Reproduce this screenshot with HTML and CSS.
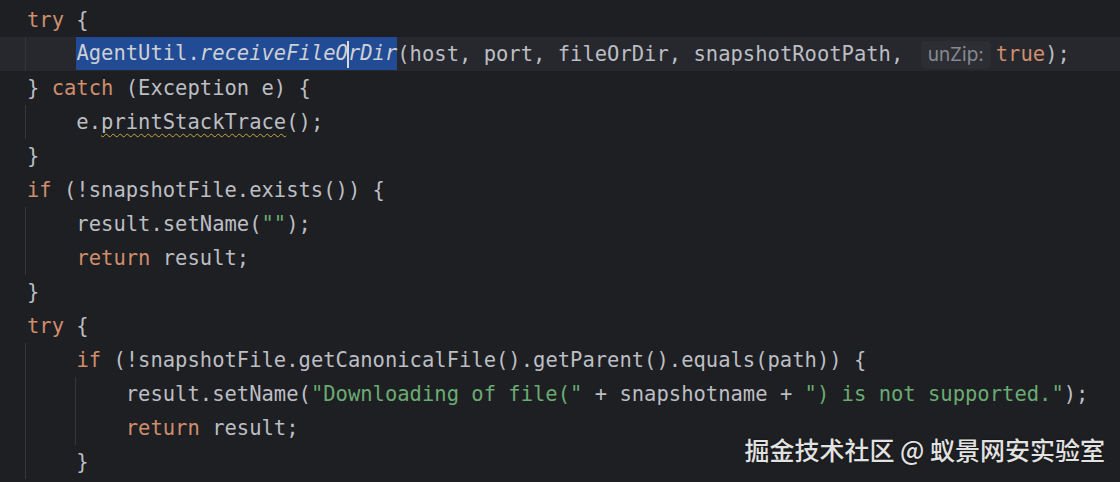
FILE: index.html
```html
<!DOCTYPE html>
<html lang="en">
<head>
<meta charset="utf-8">
<title>Editor</title>
<link rel="stylesheet" href="styles.css">
</head>
<body>
<div class="editor">
  <div class="code">
    <div class="line"><span class="kw">try</span> {</div>
    <div class="line current g1">    <span class="sel">AgentUtil.<span class="it">receiveFileO</span><span class="caret"></span><span class="it">rDir</span></span>(host, port, fileOrDir, snapshotRootPath, <span class="hint">unZip:</span><span class="kw">true</span>);</div>
    <div class="line">} <span class="kw">catch</span> (Exception e) {</div>
    <div class="line g1">    e.<span class="warn">printStackTrace</span>();</div>
    <div class="line">}</div>
    <div class="line"><span class="kw">if</span> (!snapshotFile.exists()) {</div>
    <div class="line g1">    result.setName(<span class="str">""</span>);</div>
    <div class="line g1">    <span class="kw">return</span> result;</div>
    <div class="line">}</div>
    <div class="line"><span class="kw">try</span> {</div>
    <div class="line g1">    <span class="kw">if</span> (!snapshotFile.getCanonicalFile().getParent().equals(path)) {</div>
    <div class="line g2">        result.setName(<span class="str">"Downloading of file("</span> + snapshotname + <span class="str">") is not supported."</span>);</div>
    <div class="line g2">        <span class="kw">return</span> result;</div>
    <div class="line g1">    }</div>
  </div>
  <div class="watermark">掘金技术社区 @ 蚁景网安实验室</div>
</div>
</body>
</html>
```
FILE: styles.css
```css
html, body {
  margin: 0;
  padding: 0;
  background: #1e1f22;
}
.editor {
  position: relative;
  width: 1120px;
  height: 482px;
  overflow: hidden;
  background: #1e1f22;
}
.code {
  display: flex;
  flex-direction: column;
  padding-top: 3px;
  font-family: "DejaVu Sans Mono", "Liberation Mono", monospace;
  font-size: 20.5px;
  color: #bcbec4;
}
.line {
  height: 34px;
  line-height: 34px;
  white-space: pre;
  padding-left: 27px;
}
.current {
  background-color: #26282d;
}
.g1 {
  background-image: linear-gradient(#34363b, #34363b);
  background-size: 1px 100%;
  background-position: 25px 0;
  background-repeat: no-repeat;
}
.g2 {
  background-image: linear-gradient(#34363b, #34363b), linear-gradient(#34363b, #34363b);
  background-size: 1px 100%, 1px 100%;
  background-position: 25px 0, 75px 0;
  background-repeat: no-repeat;
}
.current.g1 {
  background-color: #26282d;
}
.kw { color: #cf8e6d; }
.str { color: #6aab73; }
.it { font-style: italic; }
.sel {
  display: inline-block;
  height: 33px;
  line-height: 33px;
  background: #214b94;
  color: #cdd0d6;
  vertical-align: top;
}
.caret {
  display: inline-block;
  width: 2px;
  height: 27px;
  margin: 0 -1px;
  background: #d6d8dc;
  vertical-align: middle;
}
.warn {
  text-decoration: underline wavy #c2a64a;
  text-decoration-thickness: 1px;
  text-underline-offset: 4px;
}
.hint {
  display: inline-block;
  height: 28px;
  line-height: 28px;
  margin: 0 5px 0 5px;
  padding: 0 7px;
  border-radius: 5px;
  background: #2c2e33;
  color: #858991;
  font-family: Inter, "Noto Sans", sans-serif;
  font-size: 19px;
  vertical-align: middle;
}
.watermark {
  position: absolute;
  right: 15px;
  top: 432px;
  font-family: "Noto Sans CJK SC", "Noto Sans", sans-serif;
  font-size: 25px;
  font-weight: 500;
  line-height: 34px;
  color: #e2e2e2;
  text-shadow: 0 0 2px rgba(0, 0, 0, 0.6);
  white-space: nowrap;
}
```
